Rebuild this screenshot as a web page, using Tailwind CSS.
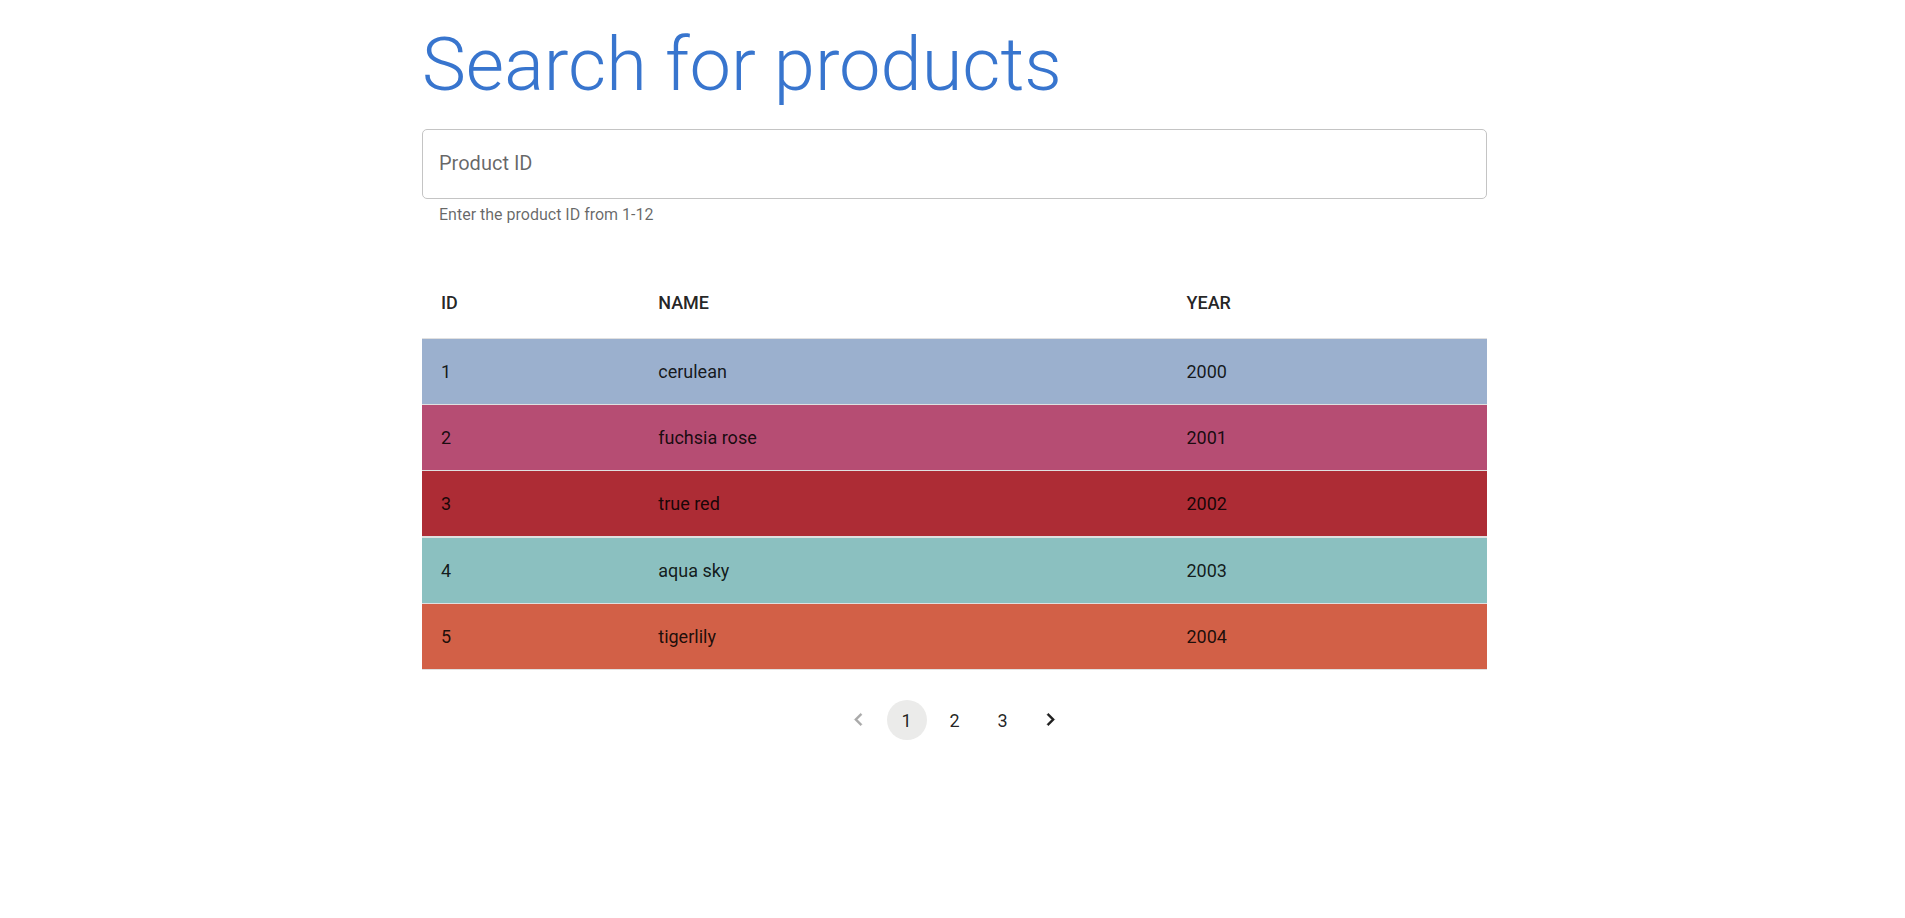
<!DOCTYPE html>
<html lang="en">
<head>
<meta charset="utf-8">
<meta name="viewport" content="width=device-width, initial-scale=1">
<title>Search for products</title>
<script src="https://cdn.jsdelivr.net/npm/@tailwindcss/browser@4"></script>
</head>
<body class="bg-white pl-1 font-['Roboto',sans-serif] text-black/87">
<main class="mx-auto w-full max-w-[1065px] pt-5">
  <h1 class="text-[74px] leading-[90px] font-light text-[#3875ce]">Search for products</h1>
  <div class="relative mt-[19px]">
    <input id="product-id" type="text" inputmode="numeric" aria-describedby="product-help" class="block h-[70px] w-full rounded-[5px] border border-[#c4c4c4] bg-transparent px-4 text-xl outline-none">
    <label for="product-id" class="pointer-events-none absolute top-5 left-[17px] text-xl leading-[28px] text-black/60">Product ID</label>
  </div>
  <p id="product-help" class="mt-1 ml-[17px] text-base leading-6 text-black/60">Enter the product ID from 1-12</p>
  <table class="mt-10 w-full table-fixed border-collapse text-left text-lg leading-6">
    <colgroup><col class="w-[20.4%]"><col class="w-[49.6%]"><col class="w-[30%]"></colgroup>
    <thead>
      <tr class="h-[71px] border-b border-[#e0e0e0]"><th scope="col" class="px-[19px] pt-0.5 font-medium">ID</th><th scope="col" class="px-[19px] pt-0.5 font-medium">NAME</th><th scope="col" class="px-[19px] pt-0.5 font-medium">YEAR</th></tr>
    </thead>
    <tbody>
      <tr class="h-[66px] border-b border-[#e0e0e0] bg-[#9bb0ce]"><td class="px-[19px] pt-0.5">1</td><td class="px-[19px] pt-0.5">cerulean</td><td class="px-[19px] pt-0.5">2000</td></tr>
      <tr class="h-[66px] border-b border-[#e0e0e0] bg-[#b64d73]"><td class="px-[19px] pt-0.5">2</td><td class="px-[19px] pt-0.5">fuchsia rose</td><td class="px-[19px] pt-0.5">2001</td></tr>
      <tr class="h-[67px] border-b-2 border-[#e0e0e0] bg-[#ad2c35]"><td class="px-[19px] pt-0.5">3</td><td class="px-[19px] pt-0.5">true red</td><td class="px-[19px] pt-0.5">2002</td></tr>
      <tr class="h-[66px] border-b border-[#e0e0e0] bg-[#8bc0c0]"><td class="px-[19px] pt-0.5">4</td><td class="px-[19px] pt-0.5">aqua sky</td><td class="px-[19px] pt-0.5">2003</td></tr>
      <tr class="h-[66px] border-b border-[#e0e0e0] bg-[#d26047]"><td class="px-[19px] pt-0.5">5</td><td class="px-[19px] pt-0.5">tigerlily</td><td class="px-[19px] pt-0.5">2004</td></tr>
    </tbody>
  </table>
  <nav aria-label="Pagination" class="mt-[30px] flex justify-center gap-2 text-lg">
    <button type="button" disabled aria-label="Previous page" class="flex size-10 items-center justify-center rounded-full opacity-38">
      <svg class="size-[25px]" viewBox="0 0 24 24" fill="currentColor" stroke="currentColor" stroke-width=".4"><path d="M15.41 7.41 14 6l-6 6 6 6 1.41-1.41L10.83 12z"/></svg>
    </button>
    <button type="button" aria-current="page" class="size-10 rounded-full bg-[#ebebea] pt-0.5">1</button>
    <button type="button" class="size-10 rounded-full pt-0.5">2</button>
    <button type="button" class="size-10 rounded-full pt-0.5">3</button>
    <button type="button" aria-label="Next page" class="flex size-10 items-center justify-center rounded-full">
      <svg class="size-[25px]" viewBox="0 0 24 24" fill="currentColor" stroke="currentColor" stroke-width=".4"><path d="M10 6 8.590 7.410 13.170 12l-4.580 4.590L10 18l6-6z"/></svg>
    </button>
  </nav>
</main>
</body>
</html>
